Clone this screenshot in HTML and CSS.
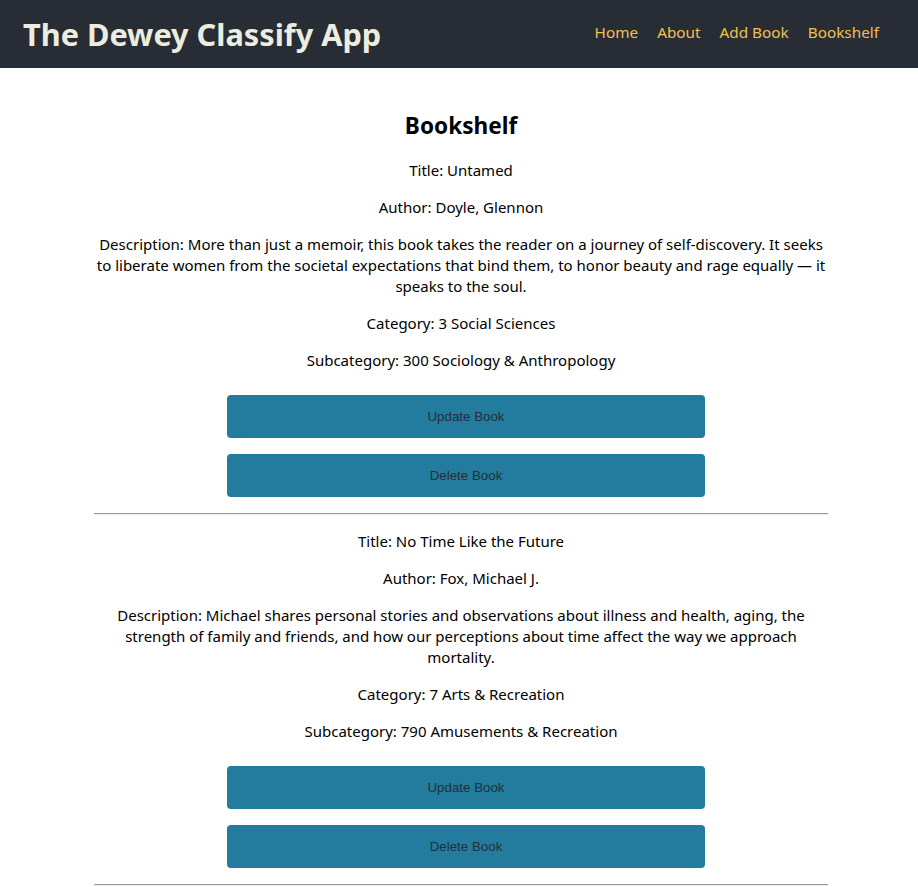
FILE: index.html
```html
<!DOCTYPE html>
<html lang="en">
<head>
<meta charset="utf-8">
<title>The Dewey Classify App</title>
<link rel="stylesheet" href="styles.css">
</head>
<body>
<header class="topbar">
  <h1 class="brand">The Dewey Classify App</h1>
  <nav class="nav">
    <a href="#">Home</a>
    <a href="#">About</a>
    <a href="#">Add Book</a>
    <a href="#">Bookshelf</a>
  </nav>
</header>
<main class="shelf">
  <h2 class="shelf-title">Bookshelf</h2>
  <section class="book">
    <p>Title: Untamed</p>
    <p>Author: Doyle, Glennon</p>
    <p>Description: More than just a memoir, this book takes the reader on a journey of self-discovery. It seeks to liberate women from the societal expectations that bind them, to honor beauty and rage equally — it speaks to the soul.</p>
    <p>Category: 3 Social Sciences</p>
    <p>Subcategory: 300 Sociology &amp; Anthropology</p>
    <div class="actions">
      <button class="btn">Update Book</button>
      <button class="btn">Delete Book</button>
    </div>
    <hr class="divider">
  </section>
  <section class="book">
    <p>Title: No Time Like the Future</p>
    <p>Author: Fox, Michael J.</p>
    <p>Description: Michael shares personal stories and observations about illness and health, aging, the strength of family and friends, and how our perceptions about time affect the way we approach mortality.</p>
    <p>Category: 7 Arts &amp; Recreation</p>
    <p>Subcategory: 790 Amusements &amp; Recreation</p>
    <div class="actions">
      <button class="btn">Update Book</button>
      <button class="btn">Delete Book</button>
    </div>
    <hr class="divider">
  </section>
</main>
</body>
</html>
```

FILE: styles.css
```css
html, body {
  margin: 0;
  padding: 0;
  background: #ffffff;
}
body {
  font-family: "Noto Sans", "Open Sans", sans-serif;
  color: #000;
}
.topbar {
  display: flex;
  align-items: center;
  justify-content: space-between;
  height: 68px;
  background: #282c34;
  padding: 0 39px 0 23px;
}
.brand {
  margin: 0;
  font-size: 30.7px;
  font-weight: 700;
  color: #eaeddf;
  line-height: 1;
}
.nav {
  display: flex;
  gap: 19px;
  padding-bottom: 4px;
}
.nav a {
  color: #f2c14e;
  text-decoration: none;
  font-size: 15.3px;
}
.shelf {
  width: 734px;
  margin-left: 94px;
  padding-top: 22px;
  text-align: center;
}
.shelf-title {
  margin: 20px 0 18px;
  font-size: 22.6px;
  line-height: 32px;
  font-weight: 700;
}
.book p {
  margin: 16px 0;
  font-size: 15px;
  line-height: 21px;
}
.actions {
  margin: 24px 123px 0 133px;
  display: flex;
  flex-direction: column;
  gap: 16px;
}
.btn {
  height: 43px;
  border: none;
  border-radius: 4px;
  background: #237c9d;
  color: #22303a;
  font-family: "Liberation Sans", Arial, sans-serif;
  font-size: 13.33px;
}
.divider {
  margin: 16px 0 0;
  border: none;
  border-top: 1px solid #999;
  border-bottom: 1px solid #eee;
  height: 0;
}
```
